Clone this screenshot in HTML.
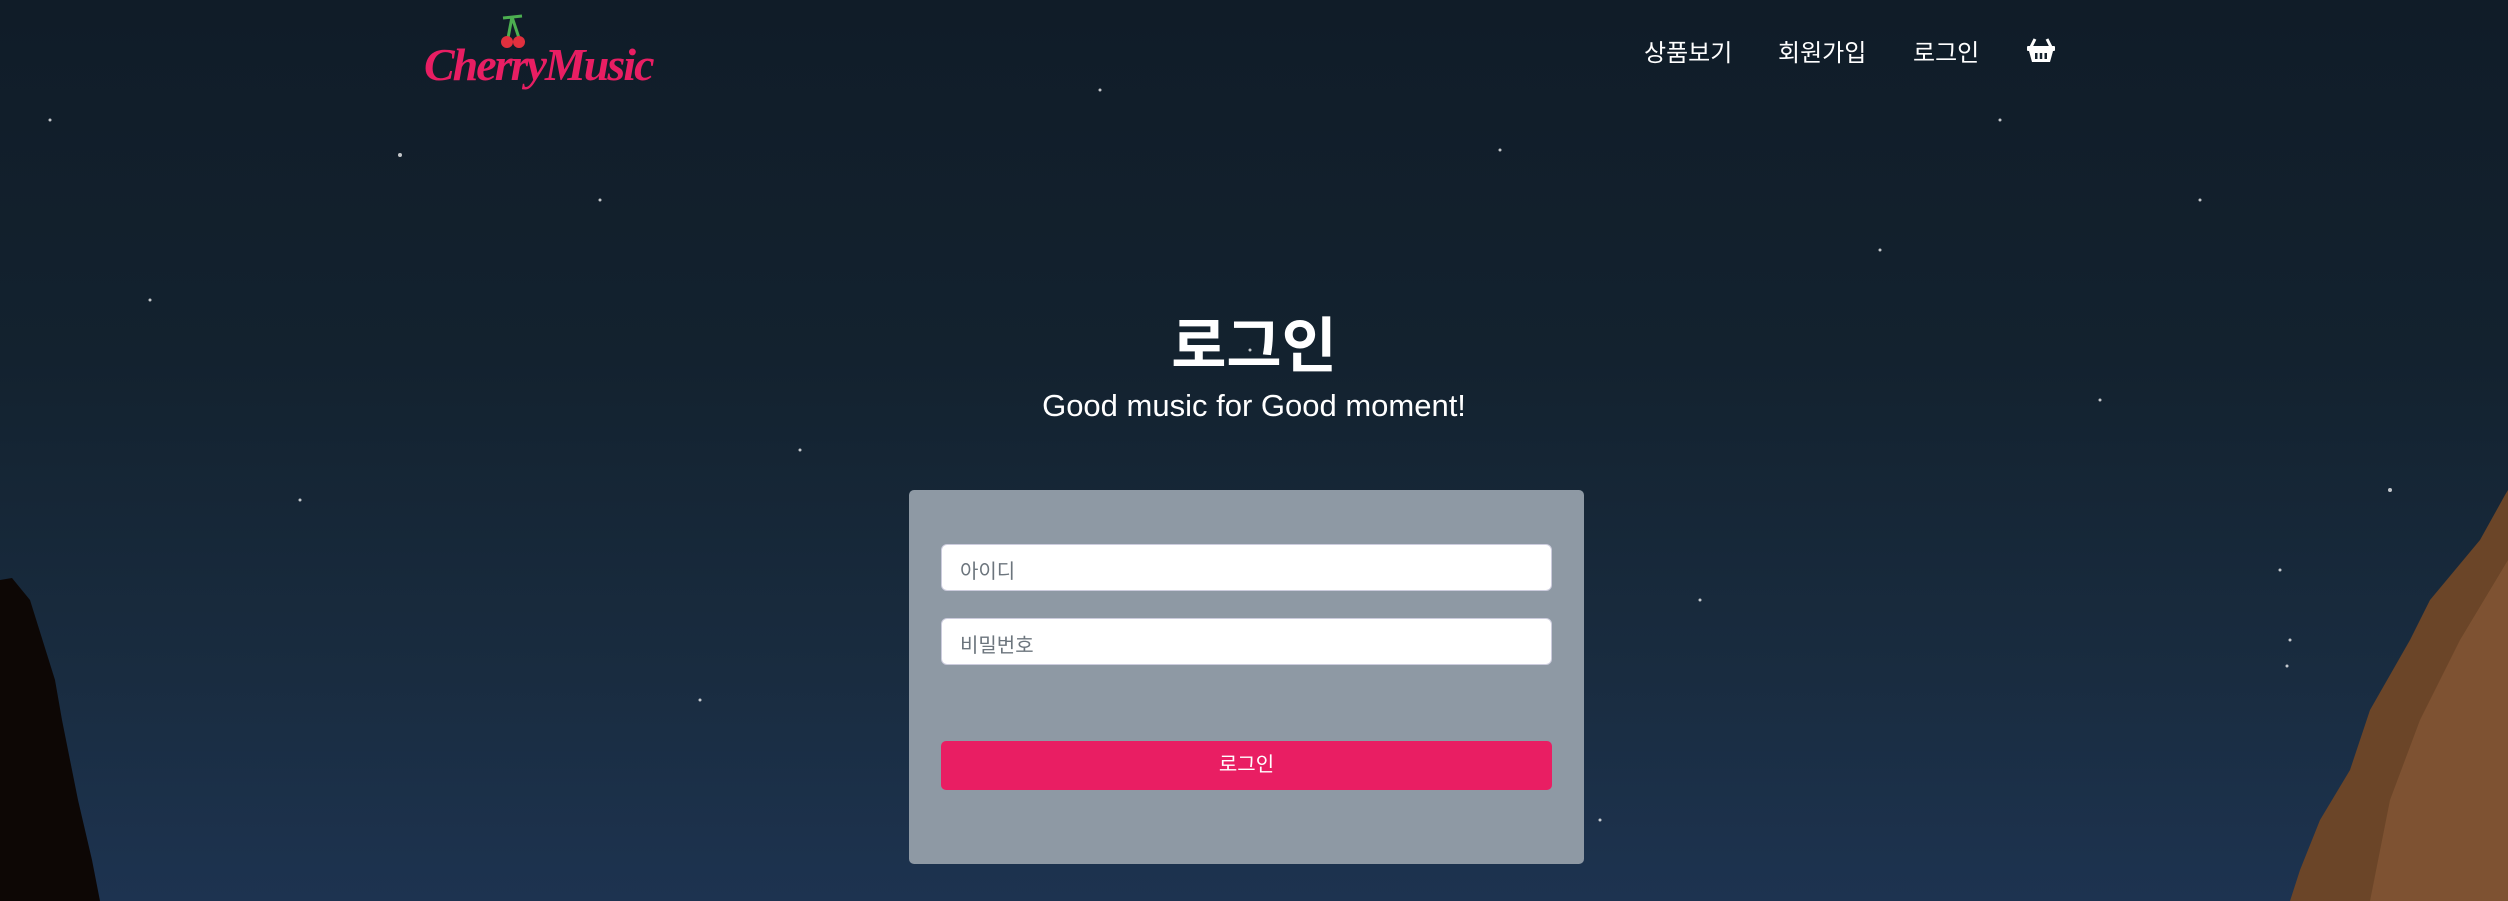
<!DOCTYPE html>
<html><head><meta charset="utf-8"><style>
*{margin:0;padding:0;box-sizing:border-box}
body{width:2508px;height:901px;overflow:hidden;position:relative;font-family:"Liberation Sans","Noto Sans CJK KR",sans-serif;background:linear-gradient(180deg,#101c28 0%,#13222f 40%,#192c40 75%,#1d3350 100%);}
.logo{position:absolute;left:424px;top:38px;font-family:"Liberation Serif",cursive;font-style:italic;font-weight:bold;font-size:46px;color:#e81e63;letter-spacing:-2px}
.nav{position:absolute;top:33px;font-size:24px;color:#fff}
h1{position:absolute;left:0;width:2508px;top:298px;text-align:center;color:#fff;font-size:60px;font-weight:bold}
.sub{position:absolute;left:0;width:2508px;top:388px;text-align:center;color:#fff;font-size:31px}
.card{position:absolute;left:909px;top:490px;width:675px;height:374px;background:#8e99a4;border-radius:5px}
.inp{position:absolute;left:32px;width:611px;height:47px;background:#fff;border-radius:6px;border:1px solid #ccd;color:#6c757d;font-size:20px;padding:10px 18px}
.btn{position:absolute;left:32px;top:251px;width:611px;height:49px;background:#e91e63;border-radius:5px;color:#fff;font-size:20px;text-align:center;line-height:48px}
</style></head><body>
<svg width="2508" height="901" style="position:absolute;left:0;top:0">
<g fill="#fff" opacity="0.75">
<circle cx="400" cy="155" r="2"/><circle cx="1250" cy="350" r="1.5"/><circle cx="2390" cy="490" r="2"/><circle cx="2280" cy="570" r="1.5"/><circle cx="2290" cy="640" r="1.5"/><circle cx="2287" cy="666" r="1.5"/><circle cx="1880" cy="250" r="1.5"/><circle cx="600" cy="200" r="1.5"/><circle cx="150" cy="300" r="1.5"/><circle cx="2000" cy="120" r="1.5"/><circle cx="800" cy="450" r="1.5"/><circle cx="1700" cy="600" r="1.5"/><circle cx="300" cy="500" r="1.5"/><circle cx="2100" cy="400" r="1.5"/><circle cx="1500" cy="150" r="1.5"/><circle cx="700" cy="700" r="1.5"/><circle cx="1600" cy="820" r="1.5"/><circle cx="2200" cy="200" r="1.5"/><circle cx="50" cy="120" r="1.5"/><circle cx="1100" cy="90" r="1.5"/>
</g>
<path d="M0 580 L12 578 L30 600 L55 680 L62 720 L78 800 L92 860 L100 901 L0 901Z" fill="#0d0705"/>
<path d="M2508 490 L2505 495 L2480 540 L2430 600 L2410 640 L2370 710 L2350 770 L2320 820 L2300 870 L2290 901 L2508 901Z" fill="#6b4528"/>
<path d="M2508 560 L2460 640 L2420 720 L2390 800 L2370 901 L2508 901Z" fill="#8a5c38" opacity="0.6"/>
</svg>
<div class="logo">CherryMusic</div>
<svg style="position:absolute;left:498px;top:14px" width="30" height="36"><path d="M5 4 L24 2 M14 3 L10 24 M14 3 L21 24" stroke="#4caf50" stroke-width="3" fill="none"/><circle cx="9" cy="28" r="6" fill="#e0303e"/><circle cx="21" cy="28" r="6" fill="#e0303e"/></svg>
<div class="nav" style="left:1644px">상품보기</div>
<div class="nav" style="left:1778px">회원가입</div>
<div class="nav" style="left:1913px">로그인</div>
<svg style="position:absolute;left:2027px;top:38px" width="28" height="24" viewBox="0 0 28 24"><path d="M8 1 L4 9 M20 1 L24 9" stroke="#fff" stroke-width="3" fill="none"/><rect x="0" y="8" width="28" height="5" rx="1" fill="#fff"/><path d="M2 13 L26 13 L23 24 L5 24Z" fill="#fff"/><rect x="8" y="15" width="2.5" height="6" fill="#13202c"/><rect x="12.75" y="15" width="2.5" height="6" fill="#13202c"/><rect x="17.5" y="15" width="2.5" height="6" fill="#13202c"/></svg>
<h1>로그인</h1>
<div class="sub">Good music for Good moment!</div>
<div class="card">
<div class="inp" style="top:54px">아이디</div>
<div class="inp" style="top:128px">비밀번호</div>
<div class="btn">로그인</div>
</div>
</body></html>
